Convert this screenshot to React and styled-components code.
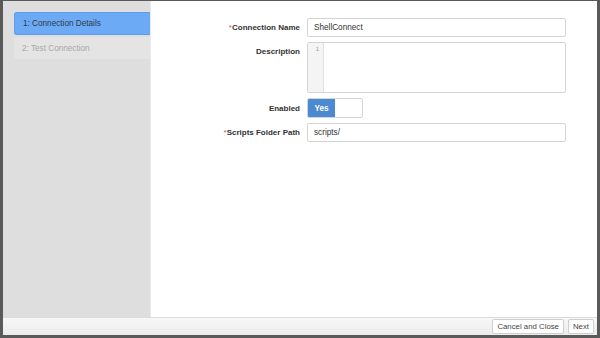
import React from "react";
import styled, { createGlobalStyle } from "styled-components";

const Global = createGlobalStyle`
  html, body { margin: 0; padding: 0; }
  body { font-family: "Liberation Sans", Arial, sans-serif; background: #fff; }
`;

const Frame = styled.div`
  width: 600px;
  height: 338px;
  box-sizing: border-box;
  border-style: solid;
  border-color: #5a5a5a;
  border-width: 1px 3px 3px 3px;
  display: flex;
  flex-direction: column;
  background: #fff;
`;

const Body = styled.div`
  flex: 1;
  display: flex;
  min-height: 0;
`;

const Sidebar = styled.div`
  width: 148px;
  background: #dedede;
  border-right: 1px solid #e9e9e9;
  padding-top: 11px;
  padding-left: 11px;
  box-sizing: border-box;
  display: flex;
  flex-direction: column;
  gap: 2px;
`;

const Step = styled.div`
  height: ${(p) => (p.active ? 23 : 22)}px;
  display: flex;
  align-items: center;
  padding-left: 8px;
  font-size: 8.2px;
  border-radius: 3px 0 0 3px;
  background: ${(p) => (p.active ? "#6caaf6" : "#e4e4e4")};
  color: ${(p) => (p.active ? "#2f3a48" : "#a8a8a8")};
  ${(p) => (p.active ? "border: 1px solid #5d9de9; border-right: none;" : "")}
  box-sizing: border-box;
`;

const Main = styled.div`
  flex: 1;
  padding-top: 17px;
  display: flex;
  flex-direction: column;
  gap: 5px;
`;

const Row = styled.div`
  display: flex;
  align-items: ${(p) => (p.top ? "flex-start" : "center")};
`;

const Label = styled.div`
  width: 156px;
  text-align: right;
  padding-right: 7px;
  box-sizing: border-box;
  font-size: 8px;
  font-weight: bold;
  color: #333;
  ${(p) => (p.top ? "padding-top: 5px;" : "")}
`;

const Req = styled.span`
  color: #d9534f;
  font-weight: normal;
`;

const Input = styled.div`
  width: 259px;
  height: 19px;
  box-sizing: border-box;
  border: 1px solid #d4d4d4;
  border-radius: 2px;
  padding-left: 6px;
  display: flex;
  align-items: center;
  font-size: 8.2px;
  color: #333;
`;

const TextArea = styled.div`
  width: 259px;
  height: 51px;
  box-sizing: border-box;
  border: 1px solid #d4d4d4;
  border-radius: 2px;
  display: flex;
`;

const Gutter = styled.div`
  width: 16px;
  background: #f4f4f4;
  border-right: 1px solid #e2e2e2;
  font-size: 6px;
  color: #999;
  text-align: right;
  padding: 3px 4px 0 0;
  box-sizing: border-box;
`;

const Toggle = styled.div`
  width: 56px;
  height: 20px;
  box-sizing: border-box;
  border: 1px solid #d4d4d4;
  border-radius: 2px;
  display: flex;
  overflow: hidden;
`;

const ToggleOn = styled.div`
  width: 27px;
  background: #4b89d1;
  color: #fff;
  font-size: 8.2px;
  font-weight: bold;
  display: flex;
  align-items: center;
  justify-content: center;
`;

const Footer = styled.div`
  height: 17px;
  border-top: 1px solid #dcdcdc;
  background: linear-gradient(#f7f7f7, #ececec);
  display: flex;
  justify-content: flex-end;
  align-items: center;
  gap: 4px;
  padding-right: 3px;
`;

const Button = styled.div`
  height: 15px;
  padding: 0 4px;
  box-sizing: border-box;
  border: 1px solid #cfcfcf;
  border-radius: 2px;
  background: #fff;
  display: flex;
  align-items: center;
  font-size: 7.8px;
  color: #444;
`;

export default function App() {
  return (
    <>
      <Global />
      <Frame>
        <Body>
          <Sidebar>
            <Step active>1: Connection Details</Step>
            <Step>2: Test Connection</Step>
          </Sidebar>
          <Main>
            <Row>
              <Label><Req>*</Req>Connection Name</Label>
              <Input>ShellConnect</Input>
            </Row>
            <Row top>
              <Label top>Description</Label>
              <TextArea>
                <Gutter>1</Gutter>
              </TextArea>
            </Row>
            <Row>
              <Label>Enabled</Label>
              <Toggle>
                <ToggleOn>Yes</ToggleOn>
              </Toggle>
            </Row>
            <Row>
              <Label><Req>*</Req>Scripts Folder Path</Label>
              <Input>scripts/</Input>
            </Row>
          </Main>
        </Body>
        <Footer>
          <Button>Cancel and Close</Button>
          <Button>Next</Button>
        </Footer>
      </Frame>
    </>
  );
}
